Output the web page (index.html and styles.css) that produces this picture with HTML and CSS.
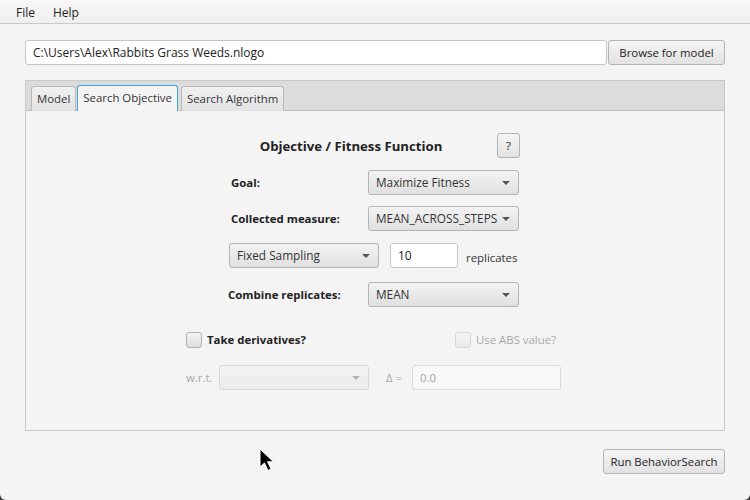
FILE: index.html
```html
<!DOCTYPE html>
<html>
<head>
<meta charset="utf-8">
<link rel="stylesheet" href="styles.css">
</head>
<body>
<div class="window">
  <div class="menubar">
    <span class="menu">File</span>
    <span class="menu">Help</span>
  </div>
  <div class="main">
    <div class="pathrow">
      <div class="textfield path">C:\Users\Alex\Rabbits Grass Weeds.nlogo</div>
      <div class="button browse">Browse for model</div>
    </div>
    <div class="tabpane">
      <div class="tabheader">
        <div class="tab">Model</div>
        <div class="tab selected">Search Objective</div>
        <div class="tab">Search Algorithm</div>
      </div>
      <div class="tabcontent">
        <div class="form">
          <div class="row r-title">
            <div class="title">Objective / Fitness Function</div>
            <div class="button help">?</div>
          </div>
          <div class="row r-goal">
            <div class="label bold l1">Goal:</div>
            <div class="combo c1">Maximize Fitness</div>
          </div>
          <div class="row r-coll">
            <div class="label bold l1">Collected measure:</div>
            <div class="combo c1">MEAN_ACROSS_STEPS</div>
          </div>
          <div class="row r-samp">
            <div class="combo c-samp">Fixed Sampling</div>
            <div class="textfield t-rep">10</div>
            <div class="label rep">replicates</div>
          </div>
          <div class="row r-comb">
            <div class="label bold l2">Combine replicates:</div>
            <div class="combo c1">MEAN</div>
          </div>
          <div class="row r-check">
            <div class="checkbox"></div>
            <div class="label bold chklabel">Take derivatives?</div>
            <div class="disabled abs">
              <div class="checkbox"></div>
              <div class="label chklabel2">Use ABS value?</div>
            </div>
          </div>
          <div class="row r-wrt disabled">
            <div class="label wrt">w.r.t.</div>
            <div class="combo c-wrt"></div>
            <div class="label delta">Δ =</div>
            <div class="textfield t-delta">0.0</div>
          </div>
        </div>
      </div>
    </div>
    <div class="bottomrow">
      <div class="button run">Run BehaviorSearch</div>
    </div>
  </div>
  <svg class="cursor" width="20" height="26" viewBox="0 0 20 26">
    <path d="M1 1 L1 19 L5.5 15 L9 22.5 L12 21 L8.5 13.8 L14.5 13.8 Z" fill="#000" stroke="#fff" stroke-width="1"/>
  </svg>
</div>
</body>
</html>
```

FILE: styles.css
```css
html {
  margin: 0;
  background: #3a3a3a;
}
body {
  margin: 0;
  font-family: "Open Sans", "Noto Sans", sans-serif;
  font-size: 11.4px;
  color: #333;
}
.window {
  position: relative;
  width: 750px;
  height: 500px;
  background: #f4f4f4;
  border-radius: 0 0 6px 6px;
  overflow: hidden;
}
.menubar {
  height: 24px;
  box-sizing: border-box;
  border-bottom: 1px solid #c9c9c9;
  background: linear-gradient(#f7f7f7, #efefef);
  display: flex;
  align-items: center;
  padding: 2px 0 0 16px;
  gap: 18px;
  font-size: 12px;
  color: #222;
}
.main {
  padding: 16px 25px 0 25px;
}
.pathrow {
  display: flex;
  height: 25px;
}
.textfield {
  box-sizing: border-box;
  flex-shrink: 0;
  background: #fff;
  border: 1px solid #c4c4c4;
  border-radius: 3px;
  height: 25px;
  line-height: 23px;
  padding-left: 7px;
  color: #222;
}
.path {
  flex: 1;
  font-size: 12px;
}
.button {
  box-sizing: border-box;
  flex-shrink: 0;
  height: 25px;
  border: 1px solid #b4b4b4;
  border-radius: 3px;
  background: linear-gradient(#f5f5f5, #e2e2e2);
  text-align: center;
  line-height: 23px;
  color: #222;
}
.browse {
  width: 117px;
  margin-left: 1px;
}
.tabpane {
  margin-top: 15px;
  height: 351px;
  box-sizing: border-box;
  border: 1px solid #c8c8c8;
  display: flex;
  flex-direction: column;
}
.tabheader {
  height: 30px;
  box-sizing: border-box;
  background: #dcdcdc;
  border-bottom: 1px solid #c0c0c0;
  padding: 5px 0 0 5px;
  display: flex;
  align-items: flex-end;
  gap: 1px;
}
.tab {
  box-sizing: border-box;
  height: 25px;
  padding: 0 5px;
  line-height: 24px;
  border: 1px solid #b8b8b8;
  border-bottom: none;
  border-radius: 3px 3px 0 0;
  background: linear-gradient(#f0f0f0, #e3e3e3);
  color: #333;
  margin-bottom: -1px;
}
.tab.selected {
  background: #f4f4f4;
  border: 1px solid #3fa7dc;
  border-bottom: none;
  height: 26px;
  margin-right: 2px;
}
.tabcontent {
  flex: 1;
  padding: 22px 0 0 160px;
}
.form {
  width: 420px;
  display: flex;
  flex-direction: column;
}
.row {
  display: flex;
  align-items: center;
  height: 25px;
}
.row > * {
  flex-shrink: 0;
}
.title {
  font-weight: bold;
  font-size: 13.2px;
  width: 240px;
  margin-left: 45px;
  text-align: center;
  color: #222;
  padding-top: 1px;
}
.help {
  width: 23px;
  margin-left: 26px;
}
.bold {
  font-weight: bold;
  color: #222;
}
.label {
  white-space: nowrap;
}
.l1 {
  width: 137px;
  margin-left: 45px;
}
.l2 {
  width: 140px;
  margin-left: 42px;
}
.r-goal { margin-top: 12px; }
.r-coll { margin-top: 11px; }
.r-samp { margin-top: 12px; }
.r-comb { margin-top: 14px; }
.r-check { margin-top: 24px; height: 17px; }
.r-wrt { margin-top: 17px; }
.combo {
  position: relative;
  box-sizing: border-box;
  height: 25px;
  width: 151px;
  border: 1px solid #b4b4b4;
  border-radius: 3px;
  background: linear-gradient(#f3f3f3, #e0e0e0);
  line-height: 23px;
  padding-left: 7px;
  font-size: 11.8px;
  color: #333;
}
.combo::after {
  content: "";
  position: absolute;
  right: 8px;
  top: 10px;
  border-left: 4px solid transparent;
  border-right: 4px solid transparent;
  border-top: 4px solid #555;
}
.c-samp {
  margin-left: 43px;
  width: 150px;
}
.t-rep {
  width: 68px;
  margin-left: 11px;
  font-size: 12px;
}
.rep {
  margin-left: 8px;
  padding-top: 3px;
}
.checkbox {
  box-sizing: border-box;
  flex-shrink: 0;
  width: 16px;
  height: 16px;
  border: 1px solid #b0b0b0;
  border-radius: 3px;
  background: linear-gradient(#f3f3f3, #dedede);
}
.chklabel {
  margin-left: 5px;
  width: 248px;
}
.chklabel2 {
  margin-left: 5px;
}
.abs {
  display: flex;
  align-items: center;
}
.disabled {
  opacity: 0.4;
}
.wrt {
  width: 33px;
}
.c-wrt {
  width: 150px;
}
.delta {
  margin-left: 17px;
  width: 26px;
}
.t-delta {
  width: 149px;
  border-color: #b8b8b8;
}
.bottomrow {
  display: flex;
  justify-content: flex-end;
  margin-top: 18px;
}
.run {
  width: 122px;
}
.cursor {
  position: absolute;
  left: 259px;
  top: 448px;
}
```
